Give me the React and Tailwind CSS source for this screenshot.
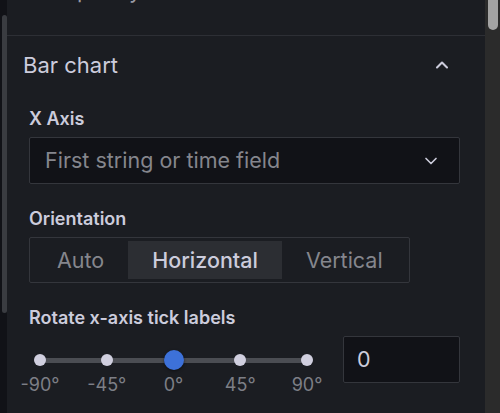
import { ChevronDown, ChevronUp } from "lucide-react";

const TICKS = [
  { value: -90, label: "-90°" },
  { value: -45, label: "-45°" },
  { value: 0, label: "0°" },
  { value: 45, label: "45°" },
  { value: 90, label: "90°" },
];

const ORIENTATIONS = ["Auto", "Horizontal", "Vertical"];

function Field({ label, children }) {
  return (
    <div className="mb-[25px]">
      <div className="text-[18px] leading-[20px] font-semibold text-[#ccccdc] mb-[8px]">{label}</div>
      {children}
    </div>
  );
}

export default function App() {
  const rotation = 0;
  const orientation = "Horizontal";
  const trackLeft = 11;
  const trackWidth = 267;

  return (
    <div className="w-[500px] h-[413px] overflow-hidden flex bg-[#111217]" style={{ fontFamily: "Inter, 'Noto Sans', sans-serif" }}>
      {/* outer scroll rail */}
      <div className="w-[7px] shrink-0 pt-[15px] pl-[2px]">
        <div className="w-[5px] h-[298px] rounded-full bg-[#3a3c41]" />
      </div>

      {/* options pane */}
      <div className="w-[478px] shrink-0 bg-[#1b1d22]">
        <div className="h-[36px] overflow-hidden border-b border-[#2d2f35]">
          <div className="pl-[33px] -mt-[23px] text-[22px] leading-[26px] text-[#9a9ba3]">Graph styles</div>
        </div>

        <div className="h-[58px] flex items-center justify-between pl-[16px] pr-[33px]">
          <span className="text-[22px] leading-[26px] text-[#ccccdc]">Bar chart</span>
          <ChevronUp size={20} strokeWidth={2.5} className="text-[#ccccdc]" />
        </div>

        <div className="pl-[22px] pr-[25px] pt-[15px]">
          <Field label="X Axis">
            <div className="h-[47px] flex items-center justify-between pl-[15px] pr-[18px] bg-[#111217] border border-[#34363c] rounded-[2px]">
              <span className="text-[21.5px] text-[#85868d]">First string or time field</span>
              <ChevronDown size={20} strokeWidth={2} className="text-[#ccccdc]" />
            </div>
          </Field>

          <Field label="Orientation">
            <div className="inline-flex h-[46px] p-[3px] border border-[#34363c] rounded-[2px] w-[381px]">
              {ORIENTATIONS.map((o) => (
                <div
                  key={o}
                  className={`flex items-center justify-center px-[24px] text-[21.5px] ${o === orientation ? "bg-[#2c2e33] text-[#ccccdc] font-medium" : "text-[#85868d]"}`}
                >
                  {o}
                </div>
              ))}
            </div>
          </Field>

          <div>
            <div className="text-[18px] leading-[20px] font-semibold text-[#ccccdc] mb-[8px]">Rotate x-axis tick labels</div>
            <div className="flex">
              <div className="relative w-[314px] h-[60px] shrink-0">
                <div className="absolute top-[22px] h-[5px] rounded-full bg-[#4b4d53]" style={{ left: trackLeft, width: trackWidth }} />
                {TICKS.map((t, i) => {
                  const x = trackLeft + (trackWidth * i) / (TICKS.length - 1);
                  const active = t.value === rotation;
                  return (
                    <div key={t.value}>
                      {active ? (
                        <div className="absolute top-[14px] w-[20px] h-[20px] rounded-full bg-[#3d71d9] shadow-[0_1px_3px_rgba(0,0,0,0.5)]" style={{ left: x - 10 }} />
                      ) : (
                        <div className="absolute top-[18px] w-[12px] h-[12px] rounded-full bg-[#d0cfdf]" style={{ left: x - 6 }} />
                      )}
                      <div className="absolute top-[38px] w-[60px] text-center text-[18px] leading-[22px] text-[#7d7f86]" style={{ left: x - 30 }}>
                        {t.label}
                      </div>
                    </div>
                  );
                })}
              </div>
              <div className="w-[117px] h-[47px] flex items-center pl-[13px] bg-[#111217] border border-[#34363c] rounded-[2px] text-[21.5px] text-[#ccccdc]">
                {rotation}
              </div>
            </div>
          </div>
        </div>
      </div>

      {/* page scrollbar */}
      <div className="w-[15px] shrink-0 bg-[#2b2b2b] pl-[3px]">
        <div className="w-[10px] h-[30px] rounded-b-full bg-[#a3a3a3]" />
      </div>
    </div>
  );
}
